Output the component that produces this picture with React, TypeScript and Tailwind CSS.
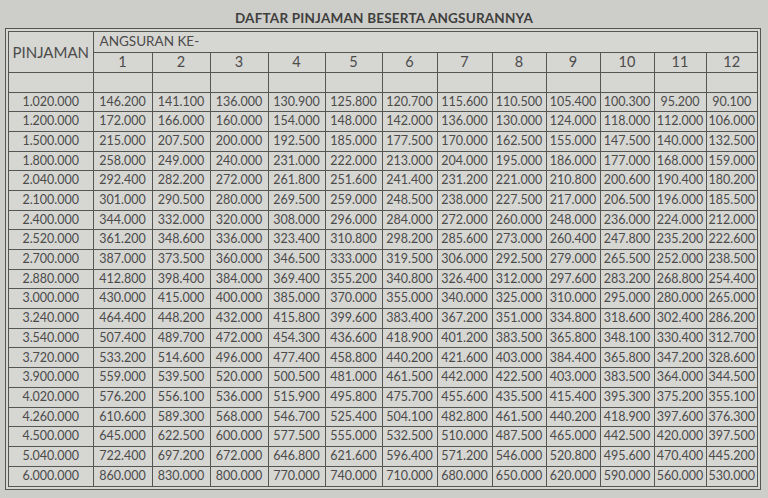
import React from 'react';

// daftar pinjaman + angsuran 1..12
const rows: [string, string[]][] = [
  ['1.020.000', ['146.200', '141.100', '136.000', '130.900', '125.800', '120.700', '115.600', '110.500', '105.400', '100.300', '95.200', '90.100']],
  ['1.200.000', ['172.000', '166.000', '160.000', '154.000', '148.000', '142.000', '136.000', '130.000', '124.000', '118.000', '112.000', '106.000']],
  ['1.500.000', ['215.000', '207.500', '200.000', '192.500', '185.000', '177.500', '170.000', '162.500', '155.000', '147.500', '140.000', '132.500']],
  ['1.800.000', ['258.000', '249.000', '240.000', '231.000', '222.000', '213.000', '204.000', '195.000', '186.000', '177.000', '168.000', '159.000']],
  ['2.040.000', ['292.400', '282.200', '272.000', '261.800', '251.600', '241.400', '231.200', '221.000', '210.800', '200.600', '190.400', '180.200']],
  ['2.100.000', ['301.000', '290.500', '280.000', '269.500', '259.000', '248.500', '238.000', '227.500', '217.000', '206.500', '196.000', '185.500']],
  ['2.400.000', ['344.000', '332.000', '320.000', '308.000', '296.000', '284.000', '272.000', '260.000', '248.000', '236.000', '224.000', '212.000']],
  ['2.520.000', ['361.200', '348.600', '336.000', '323.400', '310.800', '298.200', '285.600', '273.000', '260.400', '247.800', '235.200', '222.600']],
  ['2.700.000', ['387.000', '373.500', '360.000', '346.500', '333.000', '319.500', '306.000', '292.500', '279.000', '265.500', '252.000', '238.500']],
  ['2.880.000', ['412.800', '398.400', '384.000', '369.400', '355.200', '340.800', '326.400', '312.000', '297.600', '283.200', '268.800', '254.400']],
  ['3.000.000', ['430.000', '415.000', '400.000', '385.000', '370.000', '355.000', '340.000', '325.000', '310.000', '295.000', '280.000', '265.000']],
  ['3.240.000', ['464.400', '448.200', '432.000', '415.800', '399.600', '383.400', '367.200', '351.000', '334.800', '318.600', '302.400', '286.200']],
  ['3.540.000', ['507.400', '489.700', '472.000', '454.300', '436.600', '418.900', '401.200', '383.500', '365.800', '348.100', '330.400', '312.700']],
  ['3.720.000', ['533.200', '514.600', '496.000', '477.400', '458.800', '440.200', '421.600', '403.000', '384.400', '365.800', '347.200', '328.600']],
  ['3.900.000', ['559.000', '539.500', '520.000', '500.500', '481.000', '461.500', '442.000', '422.500', '403.000', '383.500', '364.000', '344.500']],
  ['4.020.000', ['576.200', '556.100', '536.000', '515.900', '495.800', '475.700', '455.600', '435.500', '415.400', '395.300', '375.200', '355.100']],
  ['4.260.000', ['610.600', '589.300', '568.000', '546.700', '525.400', '504.100', '482.800', '461.500', '440.200', '418.900', '397.600', '376.300']],
  ['4.500.000', ['645.000', '622.500', '600.000', '577.500', '555.000', '532.500', '510.000', '487.500', '465.000', '442.500', '420.000', '397.500']],
  ['5.040.000', ['722.400', '697.200', '672.000', '646.800', '621.600', '596.400', '571.200', '546.000', '520.800', '495.600', '470.400', '445.200']],
  ['6.000.000', ['860.000', '830.000', '800.000', '770.000', '740.000', '710.000', '680.000', '650.000', '620.000', '590.000', '560.000', '530.000']],
];

const colWidths = [59, 58, 58, 57, 57, 55, 55, 54, 54, 54, 52, 51];

const cell = 'border border-[#555553] text-center align-middle';

export default function App() {
  return (
    <div
      className="w-[768px] h-[498px] bg-[#cdcdca] text-[#4b4b4a] overflow-hidden"
      style={{ fontFamily: 'Lato, "Open Sans", sans-serif' }}
    >
      <h1 className="pt-[8px] h-[28px] text-center text-[13.5px] font-bold tracking-[0.2px] text-[#3f3f3e]">
        DAFTAR PINJAMAN BESERTA ANGSURANNYA
      </h1>

      <div className="ml-[5px] w-[756px] border-[4px] border-double border-[#555553] bg-[#d6d6d3]">
        <table className="w-[748px] table-fixed border-collapse">
          <colgroup>
            <col className="w-[84px]" />
            {colWidths.map((w, i) => (
              <col key={i} style={{ width: w }} />
            ))}
          </colgroup>
          <thead>
            <tr className="h-[20px]">
              <th rowSpan={2} className={`${cell} border-l-0 border-t-0 font-normal text-[15px]`}>
                PINJAMAN
              </th>
              <th colSpan={12} className={`${cell} border-t-0 border-r-0 text-left pl-[6px] font-normal text-[13.5px] leading-none`}>
                ANGSURAN KE-
              </th>
            </tr>
            <tr className="h-[20px]">
              {colWidths.map((_, i) => (
                <th key={i} className={`${cell} font-normal text-[14.5px] leading-none ${i === 11 ? 'border-r-0' : ''}`}>
                  {i + 1}
                </th>
              ))}
            </tr>
            <tr className="h-[20px]">
              <td className={`${cell} border-l-0`} />
              {colWidths.map((_, i) => (
                <td key={i} className={`${cell} ${i === 11 ? 'border-r-0' : ''}`} />
              ))}
            </tr>
          </thead>
          <tbody>
            {rows.map(([amount, values], r) => (
              <tr key={amount} className="h-[19.7px] text-[12.5px] leading-none">
                <td className={`${cell} border-l-0 ${r === rows.length - 1 ? 'border-b-0' : ''}`}>{amount}</td>
                {values.map((v, i) => (
                  <td
                    key={i}
                    className={`${cell} ${i === 11 ? 'border-r-0' : ''} ${r === rows.length - 1 ? 'border-b-0' : ''}`}
                  >
                    {v}
                  </td>
                ))}
              </tr>
            ))}
          </tbody>
        </table>
      </div>
    </div>
  );
}
